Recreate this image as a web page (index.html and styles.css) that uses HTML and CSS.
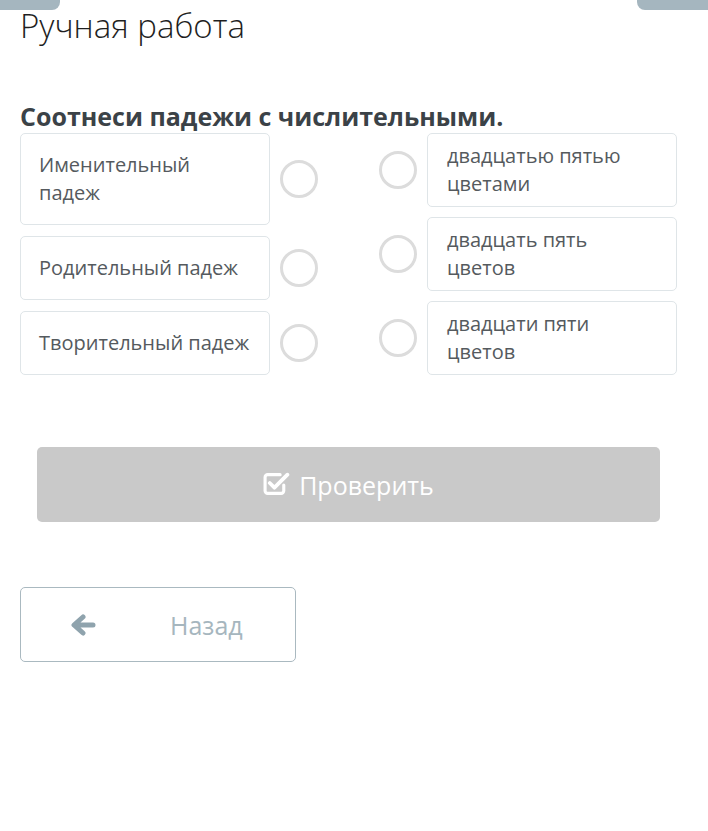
FILE: index.html
```html
<!DOCTYPE html>
<html lang="ru">
<head>
<meta charset="utf-8">
<link rel="stylesheet" href="styles.css">
</head>
<body>
<div class="tab tab-left"></div>
<div class="tab tab-right"></div>
<main class="page">
  <h1 class="title">Ручная работа</h1>
  <h2 class="task">Соотнеси падежи с числительными.</h2>
  <div class="match">
    <div class="col col-left">
      <div class="row"><div class="card card-l">Именительный падеж</div><span class="dot"></span></div>
      <div class="row"><div class="card card-l">Родительный падеж</div><span class="dot"></span></div>
      <div class="row"><div class="card card-l">Творительный падеж</div><span class="dot"></span></div>
    </div>
    <div class="col col-right">
      <div class="row"><span class="dot"></span><div class="card card-r">двадцатью пятью цветами</div></div>
      <div class="row"><span class="dot"></span><div class="card card-r">двадцать пять цветов</div></div>
      <div class="row"><span class="dot"></span><div class="card card-r">двадцати пяти цветов</div></div>
    </div>
  </div>
  <button class="check" type="button">
    <svg class="check-icon" viewBox="0 0 26 24" width="27" height="25" aria-hidden="true">
      <path d="M20 13.5v5.5a2.5 2.5 0 0 1-2.5 2.5h-13A2.5 2.5 0 0 1 2 19V6a2.5 2.5 0 0 1 2.5-2.5h12" fill="none" stroke="#fff" stroke-width="3" stroke-linecap="round"/>
      <path d="M6.5 11.5l4.5 4.5L23.5 3.5" fill="none" stroke="#fff" stroke-width="3.6" stroke-linecap="round" stroke-linejoin="round"/>
    </svg>
    <span>Проверить</span>
  </button>
  <button class="back" type="button">
    <svg class="back-icon" viewBox="0 0 26 22" width="26" height="22" aria-hidden="true">
      <path d="M13 3L4 11l9 8M5 11h18" fill="none" stroke="#8fa3ad" stroke-width="5" stroke-linecap="round" stroke-linejoin="round"/>
    </svg>
    <span class="back-text">Назад</span>
  </button>
</main>
</body>
</html>
```
FILE: styles.css
```css
* { box-sizing: border-box; }
html, body { margin: 0; padding: 0; background: #fff; }
body { font-family: "Open Sans", "Noto Sans", sans-serif; position: relative; }

.tab {
  position: absolute;
  top: 0;
  height: 10px;
  background: #a5b6bf;
}
.tab-left { left: 0; width: 60px; border-bottom-right-radius: 8px; }
.tab-right { right: 0; width: 71px; border-bottom-left-radius: 8px; }

.page { padding: 6px 31px 0 20px; display: flex; flex-direction: column; }

.title {
  margin: 0;
  font-size: 33px;
  line-height: 40px;
  font-weight: 300;
  color: #1f1f1f;
}

.task {
  margin: 54px 0 0 0;
  font-size: 25px;
  line-height: 33px;
  font-weight: 700;
  color: #3b4247;
}

.match {
  display: flex;
  justify-content: space-between;
}
.col { display: flex; flex-direction: column; }
.col-left { gap: 11px; }
.col-right { gap: 10px; }
.row { display: flex; align-items: center; gap: 10px; }

.card {
  width: 250px;
  border: 1px solid #dfe5e8;
  border-radius: 5px;
  font-size: 20px;
  line-height: 28px;
  color: #555a5e;
  background: #fff;
}
.card-l { padding: 17px 17px 17px 18px; }
.card-r { padding: 8px 20px 8px 19px; }

.dot {
  width: 38px;
  height: 38px;
  border: 3px solid #dcdcdc;
  border-radius: 50%;
  flex: none;
}

.check {
  margin: 72px 17px 0 17px;
  height: 75px;
  border: none;
  border-radius: 5px;
  background: #c9c9c9;
  color: #fff;
  font-family: inherit;
  font-size: 25px;
  display: flex;
  align-items: center;
  justify-content: center;
  gap: 9px;
  padding: 0;
}
.check-icon { margin-top: -2px; }

.back {
  margin-top: 65px;
  width: 276px;
  height: 75px;
  border: 1px solid #aab9c0;
  border-radius: 5px;
  background: #fff;
  font-family: inherit;
  font-size: 25px;
  color: #a6b6be;
  display: flex;
  align-items: center;
  padding: 0 0 0 49px;
}
.back-icon { margin-right: 74px; }
```
